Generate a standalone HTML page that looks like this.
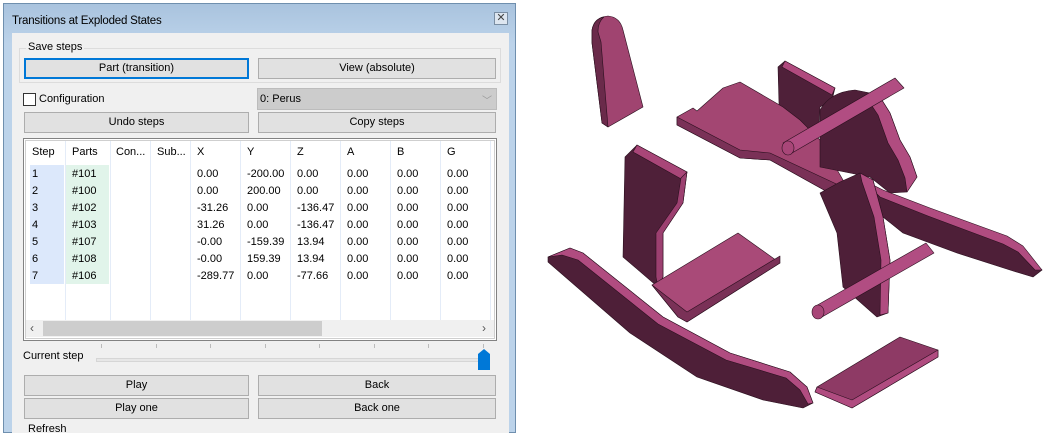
<!DOCTYPE html>
<html><head><style>
*{box-sizing:border-box;margin:0;padding:0}
body{width:1050px;height:427px;background:#fff;position:relative;overflow:hidden;font-family:"Liberation Sans",sans-serif;font-size:11px;color:#000}
.a{position:absolute}
.btn{position:absolute;background:#e1e1e1;border:1px solid #adadad;text-align:center;line-height:19px;font-size:11px}
.t{position:absolute;white-space:nowrap;font-size:11px}
</style></head><body>
<div class="a" style="left:3px;top:3px;width:513px;height:430px;background:linear-gradient(#a9c3de,#bcd3ea 40px,#bcd3ea);border:1px solid #6f8fae"></div>
<div class="t" style="left:12px;top:15px;font-size:11.5px;letter-spacing:-0.2px">Transitions at Exploded States</div>
<div class="a" style="left:494px;top:12px;width:14px;height:13px;border:1px solid #7a8ea3;background:#dde6f0;font-size:11px;line-height:11px;text-align:center;color:#444">✕</div>
<div class="a" style="left:12px;top:33px;width:497px;height:400px;background:#f0f0f0"></div>
<div class="a" style="left:19px;top:48px;width:482px;height:35px;border:1px solid #dcdcdc"></div>
<div class="t" style="left:26px;top:41px;background:#f0f0f0;padding:0 2px">Save steps</div>
<div class="btn" style="left:24px;top:58px;width:225px;height:21px;border:2px solid #0078d7;line-height:17px">Part (transition)</div>
<div class="btn" style="left:258px;top:58px;width:238px;height:21px">View (absolute)</div>
<div class="a" style="left:23px;top:93px;width:13px;height:13px;border:1px solid #333;background:#fff"></div>
<div class="t" style="left:39px;top:93px">Configuration</div>
<div class="a" style="left:257px;top:88px;width:240px;height:22px;background:#cccccc;border:1px solid #bcbcbc"></div>
<div class="t" style="left:260px;top:93px">0: Perus</div>
<div class="t" style="left:482px;top:92px;color:#999;font-size:10px">﹀</div>
<div class="btn" style="left:24px;top:112px;width:225px;height:21px">Undo steps</div>
<div class="btn" style="left:258px;top:112px;width:238px;height:21px">Copy steps</div>
<div class="a" style="left:23px;top:138px;width:474px;height:203px;border:1px solid #828282;background:#fff"></div>
<div class="a" style="left:25px;top:140px;width:470px;height:199px;border:1px solid #cfcfcf"></div>
<div class="a" style="left:30px;top:165px;width:34px;height:119px;background:#dce8fb"></div>
<div class="a" style="left:66px;top:165px;width:43px;height:119px;background:#e1f4ea"></div>
<svg class="a" style="left:0;top:0" width="520" height="427">
<g stroke="#e4ecf8" stroke-width="1">
<line x1="65.5" y1="141" x2="65.5" y2="320"/><line x1="110.5" y1="141" x2="110.5" y2="320"/><line x1="150.5" y1="141" x2="150.5" y2="320"/><line x1="190.5" y1="141" x2="190.5" y2="320"/><line x1="240.5" y1="141" x2="240.5" y2="320"/><line x1="290.5" y1="141" x2="290.5" y2="320"/><line x1="340.5" y1="141" x2="340.5" y2="320"/><line x1="390.5" y1="141" x2="390.5" y2="320"/><line x1="440.5" y1="141" x2="440.5" y2="320"/><line x1="490.5" y1="141" x2="490.5" y2="320"/>
</g>
<g stroke="#bbb"><line x1="101.5" y1="344" x2="101.5" y2="348"/><line x1="156.5" y1="344" x2="156.5" y2="348"/><line x1="210.5" y1="344" x2="210.5" y2="348"/><line x1="265.5" y1="344" x2="265.5" y2="348"/><line x1="319.5" y1="344" x2="319.5" y2="348"/><line x1="374.5" y1="344" x2="374.5" y2="348"/><line x1="428.5" y1="344" x2="428.5" y2="348"/><line x1="483.5" y1="344" x2="483.5" y2="348"/></g>
</svg>
<div class="a" style="left:26px;top:320px;width:468px;height:17px;background:#f0f0f0"></div>
<div class="a" style="left:43px;top:321px;width:279px;height:15px;background:#cdcdcd"></div>
<div class="t" style="left:30px;top:321px;color:#555;font-size:12px">‹</div>
<div class="t" style="left:482px;top:321px;color:#555;font-size:12px">›</div>
<div style="position:absolute;left:0;top:0">
<div class="t" style="left:32px;top:146px">Step</div><div class="t" style="left:72px;top:146px">Parts</div><div class="t" style="left:116px;top:146px">Con...</div><div class="t" style="left:157px;top:146px">Sub...</div><div class="t" style="left:197px;top:146px">X</div><div class="t" style="left:247px;top:146px">Y</div><div class="t" style="left:297px;top:146px">Z</div><div class="t" style="left:347px;top:146px">A</div><div class="t" style="left:397px;top:146px">B</div><div class="t" style="left:447px;top:146px">G</div>
</div>
<div style="position:absolute;left:0;top:166px;line-height:17px">
<div class="t" style="left:32px;top:0">1<br>2<br>3<br>4<br>5<br>6<br>7</div>
<div class="t" style="left:72px;top:0">#101<br>#100<br>#102<br>#103<br>#107<br>#108<br>#106</div>
<div class="t" style="left:197px;top:0">0.00<br>0.00<br>-31.26<br>31.26<br>-0.00<br>-0.00<br>-289.77</div>
<div class="t" style="left:247px;top:0">-200.00<br>200.00<br>0.00<br>0.00<br>-159.39<br>159.39<br>0.00</div>
<div class="t" style="left:297px;top:0">0.00<br>0.00<br>-136.47<br>-136.47<br>13.94<br>13.94<br>-77.66</div>
<div class="t" style="left:347px;top:0">0.00<br>0.00<br>0.00<br>0.00<br>0.00<br>0.00<br>0.00</div>
<div class="t" style="left:397px;top:0">0.00<br>0.00<br>0.00<br>0.00<br>0.00<br>0.00<br>0.00</div>
<div class="t" style="left:447px;top:0">0.00<br>0.00<br>0.00<br>0.00<br>0.00<br>0.00<br>0.00</div>
</div>
<div class="t" style="left:23px;top:350px">Current step</div>
<div class="a" style="left:96px;top:358px;width:394px;height:4px;background:#e7e7e7;border:1px solid #d6d6d6"></div>
<svg class="a" style="left:478px;top:349px" width="12" height="21"><path d="M0 5 L6 0 L12 5 V21 H0 Z" fill="#0078d7"/></svg>
<div class="btn" style="left:24px;top:375px;width:225px;height:21px">Play</div>
<div class="btn" style="left:258px;top:375px;width:238px;height:21px">Back</div>
<div class="btn" style="left:24px;top:398px;width:225px;height:21px">Play one</div>
<div class="btn" style="left:258px;top:398px;width:238px;height:21px">Back one</div>
<div class="t" style="left:28px;top:423px">Refresh</div>

<svg class="a" style="left:0;top:0" width="1050" height="427">
<g stroke="#2a0f1e" stroke-width="0.6" stroke-linejoin="round">
<!-- back piece -->
<path d="M592,43 L592,30 Q594,17 608,16 Q620,17 623,30 L643,107 L608,127 L602,123 Z" fill="#a04470"/>
<path d="M592,43 L592,30 Q594,19 604,17 Q598,22 598,32 L601,42 L608,127 L602,123 Z" fill="#6a2a4a"/>
<!-- head support plate -->
<path d="M778,67 L785,61 L835,88 L832,100 L820,107 L817,157 L780,140 Z" fill="#4f2039"/>
<path d="M785,61 L835,88 L832,95 L782,67 Z" fill="#b04a7e"/>
<!-- seat -->
<path d="M677,117 L693,108 L697,111 L723,88 L740,82 L783,107 L800,120 L820,140 L843,180 L845,193 L833,195 L770,160 L740,158 L677,125 Z" fill="#a34672"/>
<path d="M677,117 L740,150 L770,153 L845,188 L845,193 L833,195 L770,160 L740,158 L677,125 Z" fill="#7a3157"/>
<!-- head -->
<path d="M820,110 Q830,92 855,90 L870,93 L880,97 L890,113 L900,140 L910,157 L917,177 L907,192 L890,193 L870,177 L820,167 Z" fill="#4e1f38"/>
<path d="M870,93 L880,97 L890,113 L900,140 L910,157 L917,177 L907,192 L905,178 L898,160 L888,143 L878,115 L866,97 Z" fill="#b04c80"/>
<!-- upper dowel -->
<path d="M783,143 L895,78 L904,88 L792,153 Z" fill="#b14d82"/>
<ellipse cx="788" cy="148" rx="6" ry="7" fill="#a84678"/>
<!-- right rocker -->
<path d="M863,180 L883,193 L930,213 L1007,240 L1023,250 L1042,270 L1033,277 L1010,270 L957,253 L903,233 L883,217 Z" fill="#4e1f38"/>
<path d="M863,180 L883,190 L930,208 L1007,236 L1023,246 L1042,270 L1035,270 L1018,252 L1003,244 L928,216 L880,197 Z" fill="#b04c80"/>
<!-- right leg -->
<path d="M820,193 L840,182 L860,173 L873,180 L883,217 L890,260 L888,313 L877,317 L843,287 L837,233 Z" fill="#4e1f38"/>
<path d="M860,173 L873,180 L883,217 L890,260 L888,313 L880,315 L881,260 L874,217 L862,182 Z" fill="#b04c80"/>
<!-- lower dowel -->
<path d="M814,307 L926,243 L934,253 L822,317 Z" fill="#b14d82"/>
<ellipse cx="818" cy="312" rx="6" ry="7" fill="#a84678"/>
<!-- left side panel -->
<path d="M625,157 L637,145 L687,172 L683,203 L663,233 L663,277 L658,287 L623,257 Z" fill="#4f2039"/>
<path d="M637,145 L687,172 L683,180 L633,152 Z" fill="#a84678"/>
<path d="M687,172 L683,203 L663,233 L663,277 L658,287 L656,277 L656,233 L677,203 L681,178 Z" fill="#9c4070"/>
<!-- footrest -->
<path d="M652,285 L738,233 L780,263 L687,322 L678,317 Z" fill="#a94a78"/>
<path d="M652,285 L687,312 L780,256 L780,263 L687,322 L678,317 Z" fill="#7a3157"/>
<!-- left rocker -->
<path d="M548,257 L570,248 L583,253 L663,317 L730,353 L790,372 L807,387 L813,403 L803,408 L763,400 L697,377 L630,333 L548,262 Z" fill="#4e1f38"/>
<path d="M548,257 L570,248 L583,253 L663,317 L730,353 L790,372 L807,387 L813,403 L808,404 L800,390 L786,378 L726,360 L658,324 L578,260 L562,255 Z" fill="#b04c80"/>
<!-- bottom plank -->
<path d="M817,387 L900,337 L938,350 L938,357 L852,408 L815,392 Z" fill="#8e3a65"/>
<path d="M817,387 L852,400 L938,350 L938,357 L852,408 L815,392 Z" fill="#b04c80"/>
</g>
</svg>
</body></html>
